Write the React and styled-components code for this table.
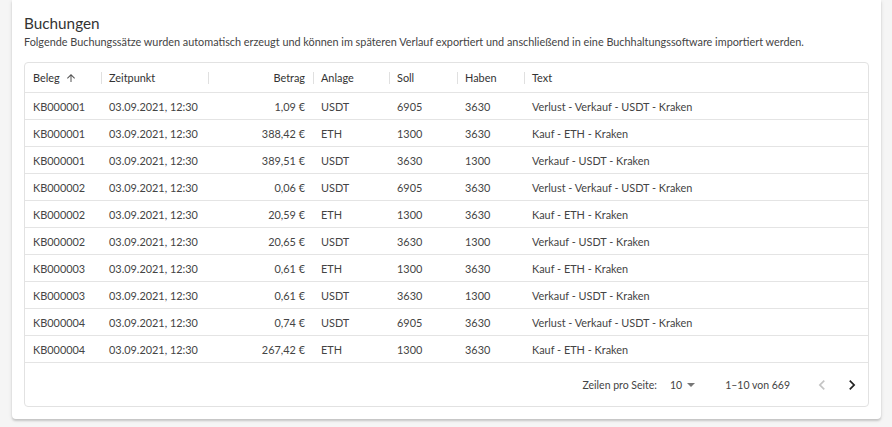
import React from 'react';
import styled, { createGlobalStyle } from 'styled-components';

const GlobalStyle = createGlobalStyle`
  html, body {
    margin: 0;
    padding: 0;
    background: #f5f5f5;
    font-family: Lato, "Noto Sans", sans-serif;
    color: #3d3d3d;
  }
`;

const rows = [
  ['KB000001', '1,09 €', 'USDT', '6905', '3630', 'Verlust - Verkauf - USDT - Kraken'],
  ['KB000001', '388,42 €', 'ETH', '1300', '3630', 'Kauf - ETH - Kraken'],
  ['KB000001', '389,51 €', 'USDT', '3630', '1300', 'Verkauf - USDT - Kraken'],
  ['KB000002', '0,06 €', 'USDT', '6905', '3630', 'Verlust - Verkauf - USDT - Kraken'],
  ['KB000002', '20,59 €', 'ETH', '1300', '3630', 'Kauf - ETH - Kraken'],
  ['KB000002', '20,65 €', 'USDT', '3630', '1300', 'Verkauf - USDT - Kraken'],
  ['KB000003', '0,61 €', 'ETH', '1300', '3630', 'Kauf - ETH - Kraken'],
  ['KB000003', '0,61 €', 'USDT', '3630', '1300', 'Verkauf - USDT - Kraken'],
  ['KB000004', '0,74 €', 'USDT', '6905', '3630', 'Verlust - Verkauf - USDT - Kraken'],
  ['KB000004', '267,42 €', 'ETH', '1300', '3630', 'Kauf - ETH - Kraken'],
];

const COLS = '76px 107px 105px 76px 68px 67px 1fr';

const Page = styled.div`
  padding: 0 11px 10px 12px;
`;

const Card = styled.section`
  background: #fff;
  border-radius: 0 0 4px 4px;
  box-shadow: 0 2px 2px rgba(0, 0, 0, 0.14), 0 1px 4px rgba(0, 0, 0, 0.1);
  padding: 13px 12px 12px;
`;

const Title = styled.h2`
  margin: 0;
  font-size: 15.3px;
  font-weight: 400;
  line-height: 20px;
  color: #333;
`;

const Subtitle = styled.p`
  margin: 1px 0 12px;
  font-size: 10.85px;
  line-height: 16px;
  color: #444;
`;

const Grid = styled.div`
  border: 1px solid #e2e2e2;
  border-radius: 4px;
  font-size: 10.9px;
`;

const Row = styled.div`
  display: grid;
  grid-template-columns: ${COLS};
  height: ${p => (p.$head ? 29 : 26)}px;
  border-bottom: 1px solid #e4e4e4;
  align-items: center;
`;

const Cell = styled.div`
  position: relative;
  padding: 0 8px;
  white-space: nowrap;
  overflow: hidden;
  text-align: ${p => (p.$right ? 'right' : 'left')};
  color: ${p => (p.$head ? '#333' : '#444')};
`;

const Sep = styled.span`
  position: absolute;
  left: 0;
  top: 50%;
  margin-top: -6px;
  width: 1px;
  height: 12px;
  background: #e0e0e0;
`;

const HeadCell = ({ children, right, sep }) => (
  <Cell $head $right={right}>
    {sep && <Sep />}
    {children}
  </Cell>
);

const SortArrow = styled.svg`
  width: 12px;
  height: 12px;
  margin-left: 5px;
  vertical-align: -2px;
`;

const Footer = styled.div`
  height: 43px;
  display: flex;
  align-items: center;
  justify-content: flex-end;
  font-size: 10.5px;
  color: #444;
  padding-right: 1px;
`;

const Select = styled.span`
  display: inline-flex;
  align-items: center;
  margin: 0 30px 0 13px;
  gap: 5px;
`;

const Caret = styled.span`
  width: 0;
  height: 0;
  border-left: 4px solid transparent;
  border-right: 4px solid transparent;
  border-top: 4px solid #777;
`;

const NavButton = styled.button`
  border: 0;
  background: none;
  padding: 0;
  width: 30px;
  height: 30px;
  display: inline-flex;
  align-items: center;
  justify-content: center;
  margin-left: ${p => (p.$first ? '17px' : '0')};
  color: ${p => (p.disabled ? '#c4c4c4' : '#222')};
`;

const Chevron = ({ dir }) => (
  <svg width="20" height="20" viewBox="0 0 24 24">
    <path
      d={dir === 'left' ? 'M15.41 7.41 14 6l-6 6 6 6 1.41-1.41L10.83 12z' : 'M10 6 8.59 7.41 13.17 12l-4.58 4.59L10 18l6-6z'}
      fill="currentColor"
    />
  </svg>
);

export default function App() {
  return (
    <Page>
      <GlobalStyle />
      <Card>
        <Title>Buchungen</Title>
        <Subtitle>
          Folgende Buchungssätze wurden automatisch erzeugt und können im späteren Verlauf exportiert und anschließend in eine Buchhaltungssoftware importiert werden.
        </Subtitle>
        <Grid>
          <Row $head>
            <HeadCell>
              Beleg
              <SortArrow viewBox="0 0 24 24">
                <path d="M20 12l-1.41-1.41L13 16.17V4h-2v12.17l-5.58-5.59L4 12l8 8 8-8z" fill="#555" transform="rotate(180 12 12)" />
              </SortArrow>
            </HeadCell>
            <HeadCell sep>Zeitpunkt</HeadCell>
            <HeadCell sep right>Betrag</HeadCell>
            <HeadCell sep>Anlage</HeadCell>
            <HeadCell sep>Soll</HeadCell>
            <HeadCell sep>Haben</HeadCell>
            <HeadCell sep>Text</HeadCell>
          </Row>
          {rows.map((r, i) => (
            <Row key={i}>
              <Cell>{r[0]}</Cell>
              <Cell>03.09.2021, 12:30</Cell>
              <Cell $right>{r[1]}</Cell>
              <Cell>{r[2]}</Cell>
              <Cell>{r[3]}</Cell>
              <Cell>{r[4]}</Cell>
              <Cell>{r[5]}</Cell>
            </Row>
          ))}
          <Footer>
            Zeilen pro Seite:
            <Select>
              10
              <Caret />
            </Select>
            1–10 von 669
            <NavButton $first disabled>
              <Chevron dir="left" />
            </NavButton>
            <NavButton>
              <Chevron dir="right" />
            </NavButton>
          </Footer>
        </Grid>
      </Card>
    </Page>
  );
}
